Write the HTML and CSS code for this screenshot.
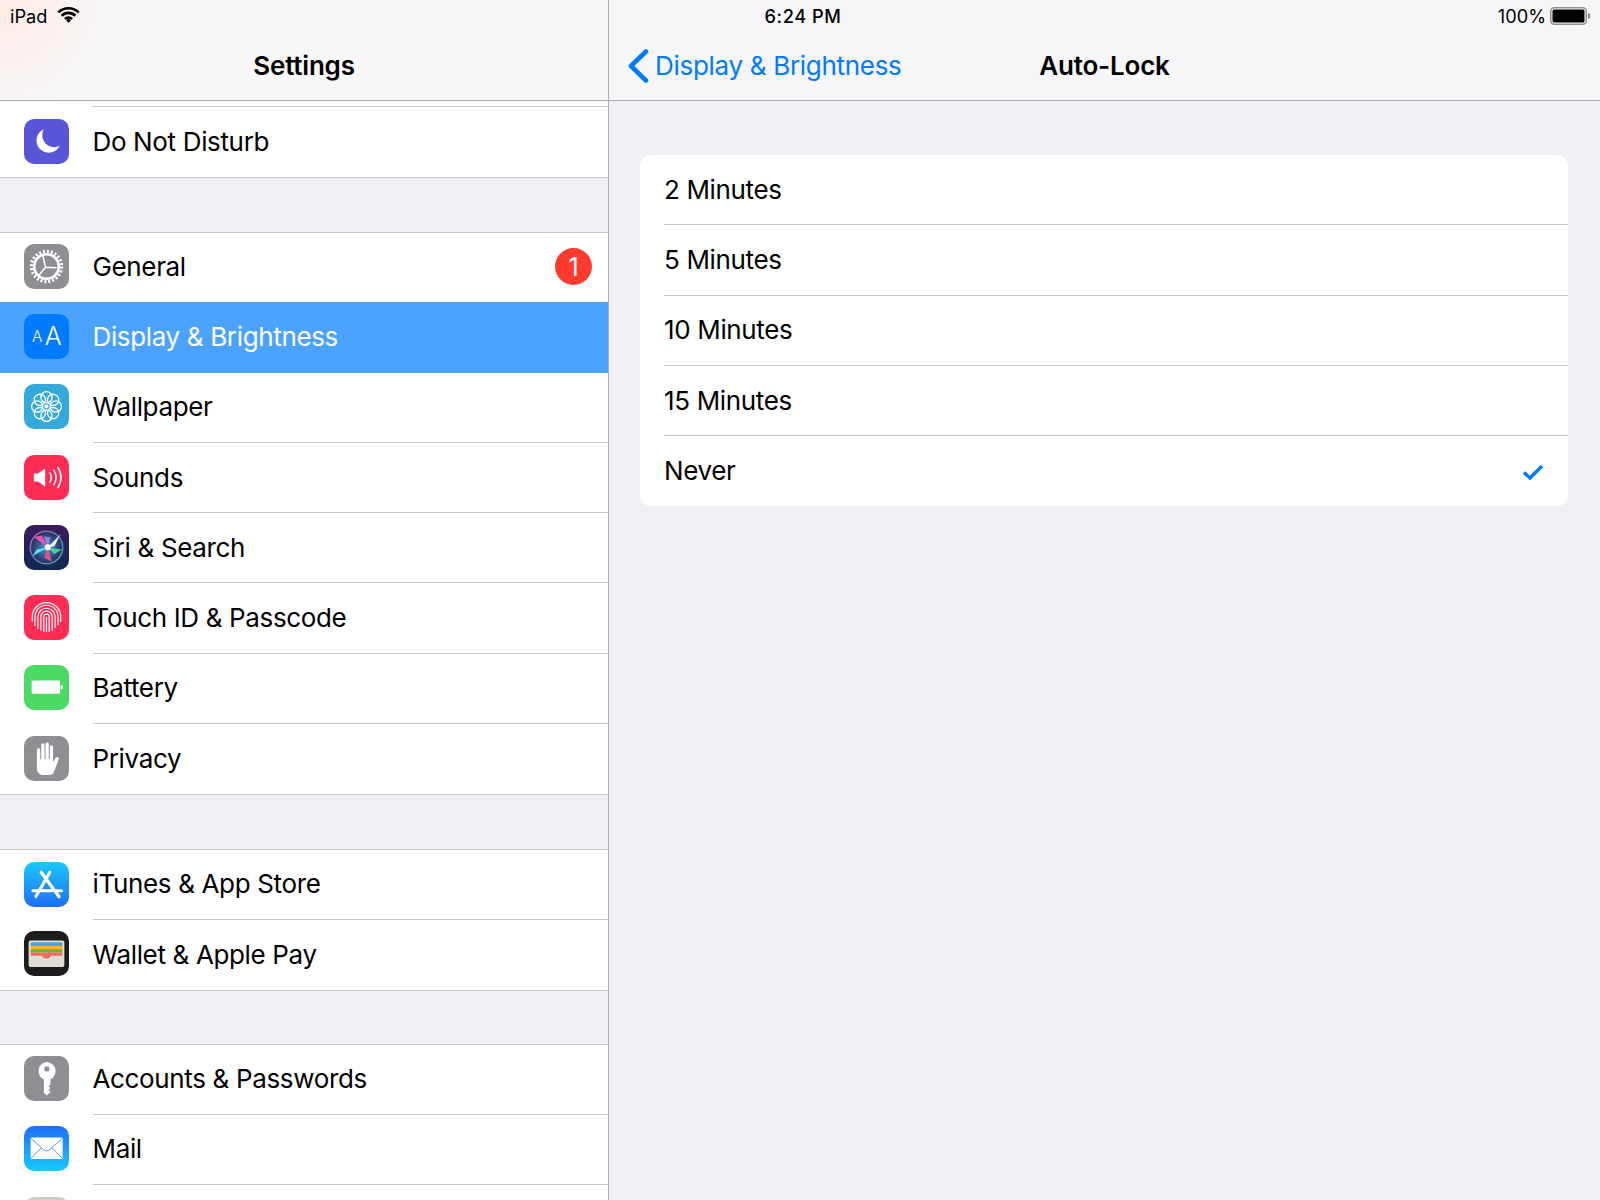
FILE: index.html
```html
<!DOCTYPE html>
<html lang="en">
<head>
    <meta charset="UTF-8">
    <meta name="viewport" content="width=device-width, initial-scale=1.0">
    <title>Settings</title>
    <link rel="stylesheet" href="styles.css">
</head>
<body>
    <div class="status">
        <div class="status-left">
            <span>iPad</span>
            <svg class="wifi" viewBox="0 0 22 16"><path d="M1.2 6a14 14 0 0 1 19.600 0M4.400 9.200a9.200 9.200 0 0 1 13.200 0M7.600 12.300a4.700 4.700 0 0 1 6.800 0" fill="none" stroke="#000" stroke-width="2.500"/><path d="M8.800 13.800l2.200-2.200 2.200 2.200-2.200 2.200z"/></svg>
        </div>
        <div class="status-time">6:24 PM</div>
        <div class="status-right">
            <span>100%</span>
            <svg class="batt" viewBox="0 0 41 18"><rect x=".75" y=".75" width="35.500" height="16.500" rx="3.500" fill="#fff" stroke="#8e8e90" stroke-width="1.500"/><rect x="2.500" y="2.500" width="32" height="13" rx="1.500"/><path d="M38 6c1.500.3 2.500 1.400 2.500 3s-1 2.700-2.500 3z" fill="#8e8e90"/></svg>
        </div>
    </div>

    <aside class="sidebar">
        <header class="nav nav-left"><h1 class="nav-title">Settings</h1></header>
        <div class="list">
            <div class="scrolled"></div>
            <section class="group group-first">
                <div class="row">
                    <svg class="ico" viewBox="0 0 136 136"><rect width="136" height="136" fill="#5856d6"/><path d="M60 31A37 37 0 1 0 108 81 36 36 0 0 1 60 31z" fill="#fff"/></svg>
                    <div class="row-body"><span>Do Not Disturb</span></div>
                </div>
            </section>
            <section class="group">
                <div class="row">
                    <svg class="ico" viewBox="0 0 136 136"><rect width="136" height="136" fill="#8e8e93"/><g fill="none" stroke="#fff"><circle cx="68" cy="68" r="45.500" stroke-width="10" stroke-dasharray="6 5.900"/><circle cx="68" cy="68" r="37" stroke-width="8"/><path d="M65 70L57 36M65 70L98 72M65 70L44 96" stroke-width="4.500"/></g></svg>
                    <div class="row-body"><span>General</span><b class="badge">1</b></div>
                </div>
                <div class="row row-active">
                    <svg class="ico" viewBox="0 0 136 136"><rect width="136" height="136" fill="#007aff"/><text class="aa" x="24" y="86" font-size="46">A</text><text class="aa" x="63" y="94" font-size="76">A</text></svg>
                    <div class="row-body"><span>Display &amp; Brightness</span></div>
                </div>
                <div class="row">
                    <svg class="ico" viewBox="0 0 136 136"><rect width="136" height="136" fill="#34aadc"/><g fill="none" stroke="#fff" stroke-width="4"><circle cx="68" cy="40" r="17"/><circle cx="88" cy="48" r="17"/><circle cx="96" cy="68" r="17"/><circle cx="88" cy="88" r="17"/><circle cx="68" cy="96" r="17"/><circle cx="48" cy="88" r="17"/><circle cx="40" cy="68" r="17"/><circle cx="48" cy="48" r="17"/></g><circle cx="68" cy="68" r="6" fill="#fff"/></svg>
                    <div class="row-body"><span>Wallpaper</span></div>
                </div>
                <div class="row">
                    <svg class="ico" viewBox="0 0 136 136"><rect width="136" height="136" fill="#ff2d55"/><path d="M30 56h12l22-15v54L42 80H30z" fill="#fff"/><path d="M78 54c6 9 6 19 0 28M90 46c9 14 9 30 0 44M102 37c13 19 13 43 0 62" fill="none" stroke="#fff" stroke-width="4.500" stroke-linecap="round"/></svg>
                    <div class="row-body"><span>Sounds</span></div>
                </div>
                <div class="row">
                    <svg class="ico" viewBox="0 0 136 136">
                        <defs>
                            <linearGradient id="sirib" x1="0" y1="0" x2="0" y2="1"><stop offset="0" stop-color="#3c1a5c"/><stop offset="1" stop-color="#0e2a55"/></linearGradient>
                            <linearGradient id="siri-ring" x1="0" y1="0" x2="1" y2="1"><stop offset="0" stop-color="#b060b8"/><stop offset=".5" stop-color="#5a74b8"/><stop offset="1" stop-color="#4aa5a8"/></linearGradient>
                            <radialGradient id="siri-in"><stop offset="0" stop-color="#4aa0d0"/><stop offset=".6" stop-color="#2e5488"/><stop offset="1" stop-color="#262c55"/></radialGradient>
                            <filter id="soft"><feGaussianBlur stdDeviation="1.800"/></filter>
                        </defs>
                        <rect width="136" height="136" fill="url(#sirib)"/>
                        <circle cx="68" cy="68" r="49" fill="url(#siri-in)" stroke="url(#siri-ring)" stroke-width="5"/>
                        <g filter="url(#soft)">
                            <path d="M72 68L30 36 54 32z" fill="#e653b0"/>
                            <path d="M72 68L110 28 92 64z" fill="#f4f0fa"/>
                            <path d="M72 68L114 74 92 88z" fill="#46d49a"/>
                            <path d="M72 68L84 110 62 100z" fill="#e8508a"/>
                            <path d="M72 68L26 94 38 74z" fill="#62e0f5"/>
                            <path d="M72 68L60 34 80 38z" fill="#9a7fe0"/>
                        </g>
                        <circle cx="72" cy="67" r="9" fill="#fff" filter="url(#soft)"/>
                    </svg>
                    <div class="row-body"><span>Siri &amp; Search</span></div>
                </div>
                <div class="row">
                    <svg class="ico" viewBox="0 0 136 136"><rect width="136" height="136" fill="#ff2d55"/><g fill="none" stroke="#fff" stroke-width="3.600" stroke-linecap="round"><path d="M25 78V66a43 43 0 0 1 86 0v14"/><path d="M33 92V66a35 35 0 0 1 70 0v24"/><path d="M42 101V66a26 26 0 0 1 52 0v32"/><path d="M51 106V66a17 17 0 0 1 34 0v41"/><path d="M60 110V66a8 8 0 0 1 16 0v44"/><path d="M68 68v43"/></g></svg>
                    <div class="row-body"><span>Touch ID &amp; Passcode</span></div>
                </div>
                <div class="row">
                    <svg class="ico" viewBox="0 0 136 136"><rect width="136" height="136" fill="#4cd964"/><rect x="23" y="47" width="86" height="40" rx="3" fill="#fff"/><path d="M111 60c4 1 7 3 7 7s-3 6-7 7z" fill="#fff"/></svg>
                    <div class="row-body"><span>Battery</span></div>
                </div>
                <div class="row">
                    <svg class="ico" viewBox="0 0 136 136"><rect width="136" height="136" fill="#8e8e93"/><path d="M39 42a5 5 0 0 1 10 0v28h3V27a5 5 0 0 1 10 0v43h3V24a5 5 0 0 1 10 0v46h3V33a5 5 0 0 1 10 0v46l8-13c3-5 12-2 9 4L90 110c-3 5-8 8-15 8H60c-12 0-21-8-21-20z" fill="#fff"/></svg>
                    <div class="row-body"><span>Privacy</span></div>
                </div>
            </section>
            <section class="group">
                <div class="row">
                    <svg class="ico" viewBox="0 0 136 136">
                        <defs><linearGradient id="store" x1="0" y1="0" x2="0" y2="1"><stop offset="0" stop-color="#1bc8fb"/><stop offset="1" stop-color="#1d6ef3"/></linearGradient></defs>
                        <rect width="136" height="136" fill="url(#store)"/>
                        <path d="M78 31L36 104M52 31L106 105M27 87H84M98 87H113" fill="none" stroke="#fff" stroke-width="9.500" stroke-linecap="round"/>
                    </svg>
                    <div class="row-body"><span>iTunes &amp; App Store</span></div>
                </div>
                <div class="row">
                    <svg class="ico" viewBox="0 0 136 136"><rect width="136" height="136" fill="#1d1d1d"/><rect x="14" y="29" width="108" height="80" rx="6" fill="#e0ded4"/><path d="M20 38a4 4 0 0 1 4-4h88a4 4 0 0 1 4 4v7H20z" fill="#46a3d8"/><rect x="20" y="45" width="96" height="10" fill="#f4b42c"/><rect x="20" y="55" width="96" height="10" fill="#62b245"/><path d="M20 65h96v10H86c-5 0-6 2-8 5-3 4-17 4-20 0-2-3-3-5-8-5H20z" fill="#ee6d60"/></svg>
                    <div class="row-body"><span>Wallet &amp; Apple Pay</span></div>
                </div>
            </section>
            <section class="group group-last">
                <div class="row">
                    <svg class="ico" viewBox="0 0 136 136"><rect width="136" height="136" fill="#8e8e93"/><path d="M69 18a28 28 0 0 1 11 53v15l-6 6 6 5-6 6 6 6-11 10-9-8V71a28 28 0 0 1 9-53z" fill="#fff"/><circle cx="69" cy="39" r="8" fill="#8e8e93"/></svg>
                    <div class="row-body"><span>Accounts &amp; Passwords</span></div>
                </div>
                <div class="row">
                    <svg class="ico" viewBox="0 0 136 136">
                        <defs><linearGradient id="mail" x1="0" y1="0" x2="0" y2="1"><stop offset="0" stop-color="#1d6ef3"/><stop offset="1" stop-color="#1bc8fb"/></linearGradient></defs>
                        <rect width="136" height="136" fill="url(#mail)"/>
                        <rect x="20" y="35" width="97" height="65" rx="4" fill="#fff"/>
                        <path d="M22 38l38 34c5 4 12 4 17 0l38-34M22 97l30-31M115 97L85 66" fill="none" stroke="#2a8df5" stroke-width="2.500"/>
                    </svg>
                    <div class="row-body"><span>Mail</span></div>
                </div>
                <div class="row">
                    <svg class="ico" viewBox="0 0 136 136"><rect width="136" height="136" fill="#cfcdc7"/></svg>
                    <div class="row-body"></div>
                </div>
            </section>
        </div>
    </aside>

    <main class="detail">
        <header class="nav nav-right">
            <a class="back">
                <svg class="chev" viewBox="0 0 22 34"><path d="M19 2.500L4 17l15 14.500" fill="none" stroke="#007aff" stroke-width="4.600" stroke-linecap="round" stroke-linejoin="round"/></svg>
                Display &amp; Brightness
            </a>
            <h1 class="nav-title">Auto-Lock</h1>
        </header>
        <div class="card">
            <div class="opt"><span>2 Minutes</span></div>
            <div class="opt"><span>5 Minutes</span></div>
            <div class="opt"><span>10 Minutes</span></div>
            <div class="opt"><span>15 Minutes</span></div>
            <div class="opt">
                <span>Never</span>
                <svg class="check" viewBox="0 0 22 16"><path d="M2 8.500l6 5.500L20 2" fill="none" stroke="#007aff" stroke-width="3.400"/></svg>
            </div>
        </div>
    </main>
</body>
</html>
```

FILE: styles.css
```css
* {
    box-sizing: border-box;
}

html, body {
    height: 100%;
}

body {
    margin: 0;
    height: 1200px;
    overflow: hidden;
    display: flex;
    position: relative;
    font-family: Inter, "Liberation Sans", sans-serif;
    background-color: #efeff4;
    color: #000;
}

.status {
    position: absolute;
    top: 0;
    left: 0;
    right: 0;
    z-index: 1;
    height: 32px;
    padding: 0 9px 0 10px;
    display: grid;
    grid-template-columns: 1fr auto 1fr;
    align-items: center;
    font-size: 18.200px;
}

.status-left {
    display: flex;
    align-items: center;
    gap: 10px;
}

.status-time {
    margin-left: 5px;
    font-weight: 500;
    letter-spacing: 0.55px;
}

.status-right {
    display: flex;
    align-items: center;
    justify-content: flex-end;
    gap: 4px;
}

.wifi {
    width: 23px;
    height: 17px;
    margin-top: -3px;
}

.batt {
    width: 41px;
    height: 18px;
}

.sidebar {
    width: 609px;
    flex-shrink: 0;
    border-right: 1px solid #b0b0b3;
    overflow: hidden;
}

.nav {
    height: 101px;
    padding-top: 31px;
    border-bottom: 1px solid #ababae;
    align-items: center;
}

.nav-left {
    display: flex;
    justify-content: center;
    background: radial-gradient(circle at 0 0, #fdeae6, rgba(253, 234, 230, 0) 110px), #f7f7f7;
}

.nav-right {
    display: grid;
    grid-template-columns: 1fr auto 1fr;
    background-color: #f6f6f8;
}

.nav-title {
    margin: 0;
    font-size: 26px;
    font-weight: 600;
    letter-spacing: -0.2px;
}

.scrolled {
    height: 6px;
    background: linear-gradient(#c8c7cc, #c8c7cc) 92px 5px / 100% 1px no-repeat, #fff;
}

.group {
    margin-top: 54px;
    background-color: #fff;
    border-top: 1px solid #c8c7cc;
    border-bottom: 1px solid #c8c7cc;
}

.group-first {
    margin-top: 0;
    border-top: 0;
}

.group-last {
    margin-top: 53.300px;
}

.row {
    height: 70.300px;
    padding-left: 23.500px;
    display: flex;
    align-items: center;
    font-size: 26px;
    letter-spacing: -0.35px;
}

.row:first-child {
    height: 69.300px;
}

.group-first .row:first-child {
    height: 70px;
}

.ico {
    width: 45px;
    height: 45px;
    margin-top: -2px;
    border-radius: 10px;
    flex-shrink: 0;
}

.row-body {
    flex: 1;
    height: 100%;
    margin-left: 24px;
    padding-right: 16px;
    padding-bottom: 1px;
    display: flex;
    align-items: center;
    justify-content: space-between;
    border-bottom: 1px solid #c8c7cc;
}

.row:first-child .row-body {
    padding-bottom: 2px;
}

.group-last .row:first-child .row-body {
    padding-bottom: 1px;
}

.row:last-child .row-body,
.row:has(+ .row-active) .row-body {
    border-bottom: 0;
}

.row-active {
    background-color: #4ca2ff;
    color: #fff;
}

.row-active .row-body {
    border-bottom: 0;
}

.aa {
    fill: #fff;
    font-family: Inter, sans-serif;
    font-weight: 300;
}

.badge {
    width: 37px;
    height: 37px;
    border-radius: 50%;
    background-color: #ff3b30;
    color: #fff;
    font-weight: 400;
    font-size: 25px;
    display: flex;
    align-items: center;
    justify-content: center;
}

.detail {
    flex: 1;
    min-width: 0;
}

.back {
    display: flex;
    align-items: center;
    gap: 6px;
    padding-left: 18px;
    color: #007aff;
    font-size: 26px;
    letter-spacing: -0.3px;
}

.chev {
    width: 22px;
    height: 34px;
}

.card {
    margin: 54px 32px 0 31px;
    border-radius: 10px;
    background-color: #fff;
    font-size: 26px;
    letter-spacing: -0.35px;
    overflow: hidden;
}

.opt {
    height: 70.300px;
    margin-left: 24px;
    padding-right: 24px;
    padding-bottom: 1px;
    display: flex;
    align-items: center;
    justify-content: space-between;
    border-bottom: 1px solid #c8c7cc;
}

.opt:last-child {
    border-bottom: 0;
}

.check {
    width: 22px;
    height: 16px;
    margin-top: 2px;
}
```
